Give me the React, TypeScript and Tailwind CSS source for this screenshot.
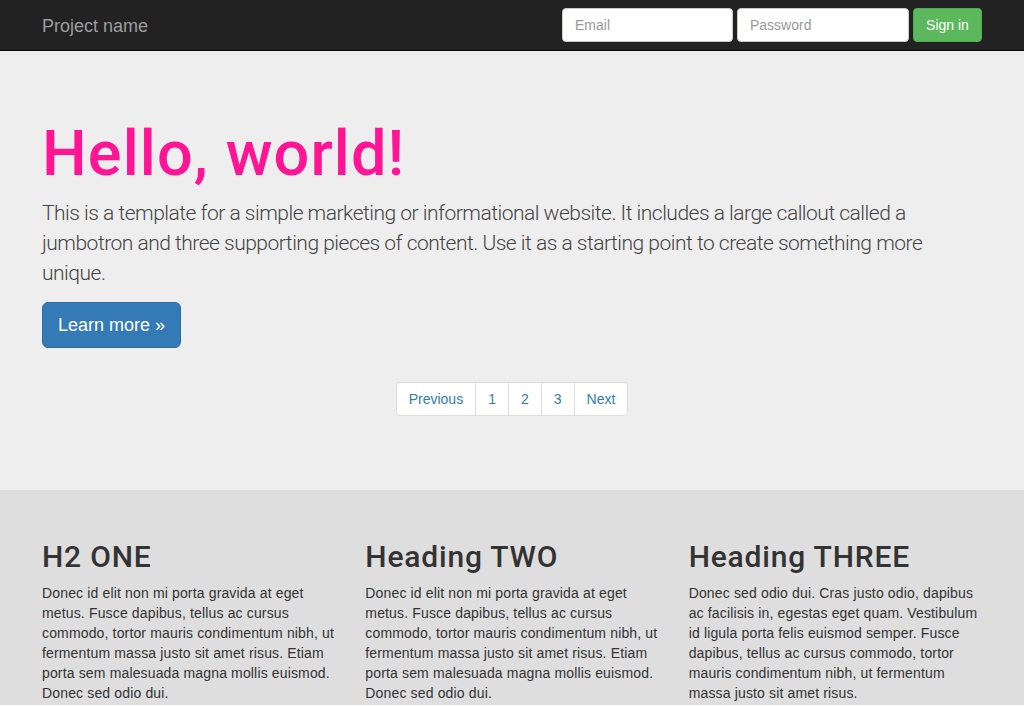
import React from "react";

const font = { fontFamily: '"Liberation Sans", Arial, sans-serif' };
const roboto = { fontFamily: 'Roboto, "Liberation Sans", sans-serif' };

export default function App() {
  return (
    <div className="min-h-[705px] bg-[#dedede] text-[#333] text-[14px] leading-[20px]" style={font}>
      <nav className="h-[51px] bg-[#222] border-b border-[#080808]">
        <div className="w-[940px] mx-auto flex items-center justify-between h-[50px]">
          <span className="text-[18px] text-[#9d9d9d] pt-[2px]">Project name</span>
          <div className="flex items-center gap-[4px]">
            <input
              placeholder="Email"
              className="w-[171px] h-[34px] bg-white border border-[#ccc] rounded-[4px] px-[12px] text-[14px] text-[#555] placeholder:text-[#999] outline-none"
            />
            <input
              placeholder="Password"
              className="w-[172px] h-[34px] bg-white border border-[#ccc] rounded-[4px] px-[12px] text-[14px] text-[#555] placeholder:text-[#999] outline-none"
            />
            <button className="w-[69px] h-[34px] bg-[#5cb85c] border border-[#4cae4c] rounded-[4px] text-white text-[14px]">
              Sign in
            </button>
          </div>
        </div>
      </nav>

      <div className="bg-[#eee] pt-[48px] pb-[74px]">
        <div className="w-[940px] mx-auto">
          <h1
            className="mt-[20px] mb-[10px] text-[63px] leading-[69px] font-medium tracking-[1.1px] text-[#ff1493]"
            style={roboto}
          >
            Hello, world!
          </h1>
          <p className="text-[21px] leading-[30px] font-light tracking-[-0.5px] text-[#444] mb-[14px]" style={roboto}>
            This is a template for a simple marketing or informational website. It includes a large callout called a
            jumbotron and three supporting pieces of content. Use it as a starting point to create something more
            unique.
          </p>
          <button className="h-[46px] w-[139px] bg-[#337ab7] border border-[#2e6da4] rounded-[6px] text-white text-[18px]">
            Learn more »
          </button>
          <div className="flex justify-center mt-[34px]">
            <ul className="flex text-[#337ab7] text-[14px]">
              <li className="h-[34px] px-[12px] flex items-center bg-white border border-[#ddd] rounded-l-[4px]">Previous</li>
              <li className="h-[34px] px-[12px] flex items-center bg-white border border-[#ddd] -ml-px">1</li>
              <li className="h-[34px] px-[12px] flex items-center bg-white border border-[#ddd] -ml-px">2</li>
              <li className="h-[34px] px-[12px] flex items-center bg-white border border-[#ddd] -ml-px">3</li>
              <li className="h-[34px] px-[12px] flex items-center bg-white border border-[#ddd] -ml-px rounded-r-[4px]">Next</li>
            </ul>
          </div>
        </div>
      </div>

      <div className="pt-[30px]">
        <div className="w-[970px] mx-auto grid grid-cols-3">
          {[
            {
              h: "H2 ONE",
              p: "Donec id elit non mi porta gravida at eget metus. Fusce dapibus, tellus ac cursus commodo, tortor mauris condimentum nibh, ut fermentum massa justo sit amet risus. Etiam porta sem malesuada magna mollis euismod. Donec sed odio dui.",
            },
            {
              h: "Heading TWO",
              p: "Donec id elit non mi porta gravida at eget metus. Fusce dapibus, tellus ac cursus commodo, tortor mauris condimentum nibh, ut fermentum massa justo sit amet risus. Etiam porta sem malesuada magna mollis euismod. Donec sed odio dui.",
            },
            {
              h: "Heading THREE",
              p: "Donec sed odio dui. Cras justo odio, dapibus ac facilisis in, egestas eget quam. Vestibulum id ligula porta felis euismod semper. Fusce dapibus, tellus ac cursus commodo, tortor mauris condimentum nibh, ut fermentum massa justo sit amet risus.",
            },
          ].map((c) => (
            <div key={c.h} className="px-[15px]">
              <h2
                className="mt-[20px] mb-[10px] text-[30px] leading-[33px] font-medium tracking-[0.8px] text-[#333]"
                style={roboto}
              >
                {c.h}
              </h2>
              <p className="tracking-[0.15px]">{c.p}</p>
            </div>
          ))}
        </div>
      </div>
    </div>
  );
}
